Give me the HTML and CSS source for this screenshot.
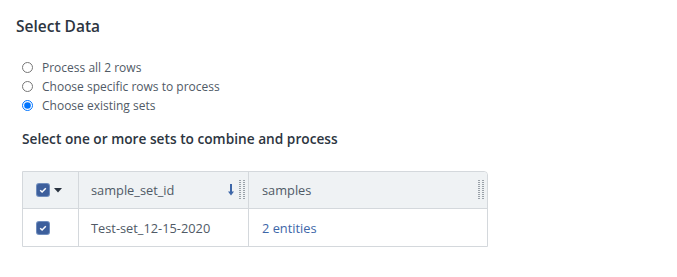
FILE: index.html
```html
<!DOCTYPE html>
<html>
<head>
<meta charset="utf-8">
<link rel="stylesheet" href="styles.css">
</head>
<body>
<div class="panel">
  <h2 class="title">Select Data</h2>
  <div class="options">
    <label class="opt"><input type="radio" name="m"><span>Process all 2 rows</span></label>
    <label class="opt"><input type="radio" name="m"><span>Choose specific rows to process</span></label>
    <label class="opt"><input type="radio" name="m" checked><span>Choose existing sets</span></label>
  </div>
  <h3 class="subtitle">Select one or more sets to combine and process</h3>
  <div class="grid">
    <div class="row head">
      <div class="cell c-sel">
        <span class="cb"><svg viewBox="0 0 12 12" width="12" height="12"><path d="M3.2 6.2 L5.1 8 L8.8 4.2" fill="none" stroke="#fff" stroke-width="1.5"/></svg></span>
        <svg class="caret" viewBox="0 0 8 5" width="8" height="5"><path d="M0 0 H8 L4 4.5 Z" fill="#2a3340"/></svg>
      </div>
      <div class="cell c-id">
        <span class="label">sample_set_id</span>
        <svg class="sort" viewBox="0 0 6 12" width="6" height="12"><path d="M3 0 V10" stroke="#3d66a8" stroke-width="2"/><path d="M0 7.5 H6 L3 11.5 Z" fill="#3d66a8"/></svg>
        <span class="handle"></span>
      </div>
      <div class="cell c-s">
        <span class="label">samples</span>
        <span class="handle"></span>
      </div>
    </div>
    <div class="row body">
      <div class="cell c-sel">
        <span class="cb"><svg viewBox="0 0 12 12" width="12" height="12"><path d="M3.2 6.2 L5.1 8 L8.8 4.2" fill="none" stroke="#fff" stroke-width="1.5"/></svg></span>
      </div>
      <div class="cell c-id"><span class="label">Test-set_12-15-2020</span></div>
      <div class="cell c-s"><a class="link">2 entities</a></div>
    </div>
  </div>
</div>
</body>
</html>
```
FILE: styles.css
```css
* { box-sizing: border-box; }
html, body { margin: 0; padding: 0; background: #fff; }
body { font-family: "Open Sans", "DejaVu Sans", sans-serif; color: #505a66; }
.panel { padding: 16px 0 0 16px; }
.title { margin: 0; font-size: 15.5px; font-weight: 600; color: #2d3541; line-height: 20px; }
.options { display: flex; flex-direction: column; gap: 0; margin: 22px 0 0 5px; }
.opt { display: flex; align-items: center; height: 19px; font-size: 12px; color: #505a66; }
.opt input { margin: 0 9px 0 1px; width: 11px; height: 11px; }
.subtitle { margin: 15px 0 0 6px; font-size: 13.7px; font-weight: 600; color: #2d3541; line-height: 18px; }
.grid { margin: 23px 0 0 6px; width: 466px; border: 1px solid #d4d8dc; border-top-right-radius: 4px; font-size: 12.8px; }
.row { display: flex; }
.row.head { height: 37px; background: #eff2f4; border-bottom: 1px solid #d4d8dc; border-top-right-radius: 4px; }
.row.body { height: 37px; }
.cell { display: flex; align-items: center; border-right: 1px solid #d4d8dc; }
.cell:last-child { border-right: none; }
.c-sel { width: 56px; padding-left: 14px; gap: 5px; }
.c-id { width: 170px; padding-left: 12px; padding-right: 3px; }
.c-s { flex: 1; padding-left: 13px; padding-right: 3px; }
.label { flex: 1; color: #505a66; }
.cb { width: 12px; height: 12px; background: #3d5f9c; border-radius: 2px; display: inline-flex; box-shadow: 0 0 0 1px #6f8dbd; }
.caret { display: block; }
.sort { margin-right: 5px; }
.handle { width: 6px; height: 20px; background-image: repeating-linear-gradient(to bottom, #9aa1a8 0 1px, transparent 1px 2px); -webkit-mask: repeating-linear-gradient(to right, #000 0 2px, transparent 2px 4px); }
.link { color: #3d66a8; text-decoration: none; }
```
